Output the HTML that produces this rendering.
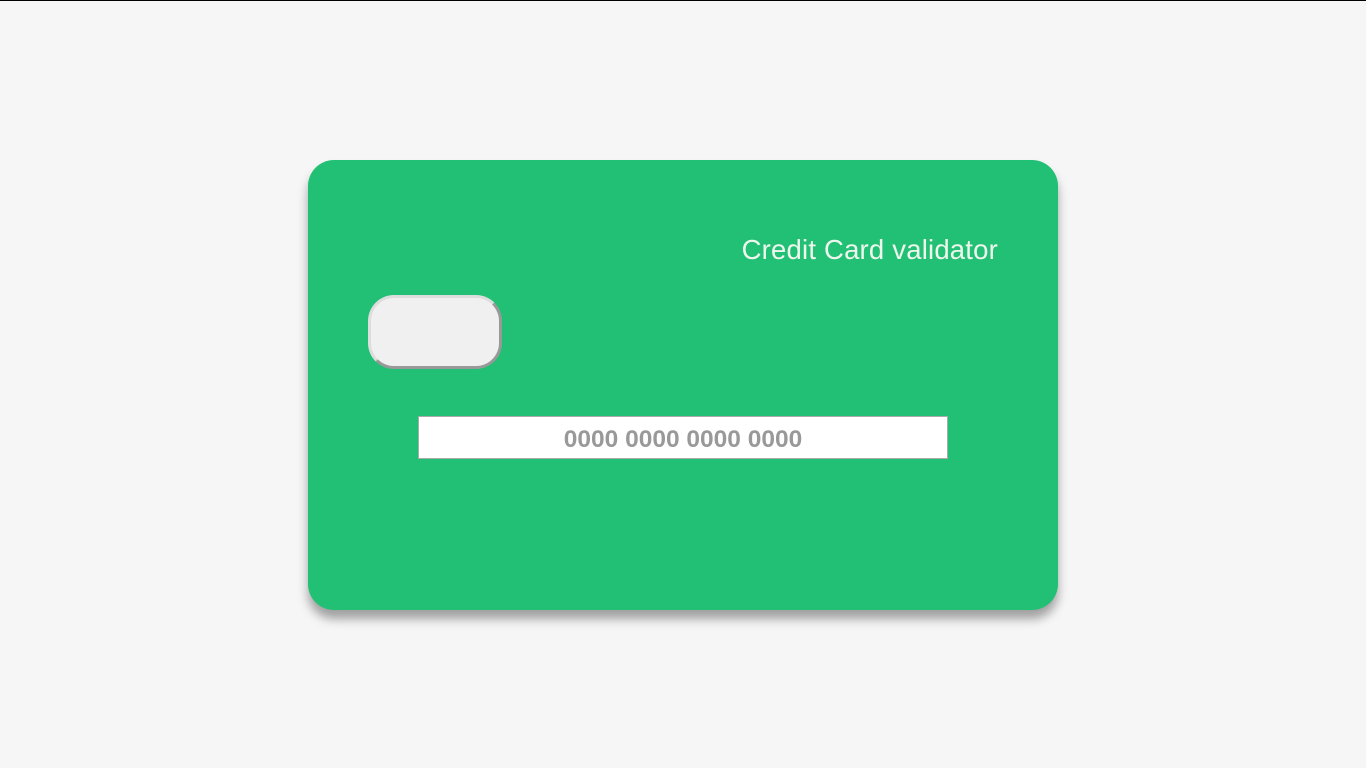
<!DOCTYPE html>
<html><head><style>
html,body{margin:0;padding:0;}
body{width:1366px;height:768px;background:#f6f6f6;border-top:1px solid #000;box-sizing:border-box;position:relative;overflow:hidden;font-family:"Liberation Sans",sans-serif;}
.card{position:absolute;left:308px;top:159px;width:750px;height:450px;background:#22c074;border-radius:26px;box-shadow:0 9px 10px rgba(0,0,0,0.35);}
.title{position:absolute;right:60px;top:74px;font-size:27.5px;color:#eef6ee;font-weight:300;letter-spacing:0.2px;}
.chip{position:absolute;left:60px;top:135px;width:134px;height:74px;box-sizing:border-box;background:#f0f0f0;border-radius:26px;border:3px solid;border-color:#ddd #999 #999 #ddd;}
.inp{position:absolute;left:110px;top:256px;width:530px;height:43px;box-sizing:border-box;background:#fff;border:1px solid #aaa;text-align:center;font-weight:bold;font-size:24.5px;color:#999;line-height:45px;}
</style></head><body>
<div class="card">
<div class="title">Credit Card validator</div>
<div class="chip"></div>
<div class="inp">0000 0000 0000 0000</div>
</div>
</body></html>
